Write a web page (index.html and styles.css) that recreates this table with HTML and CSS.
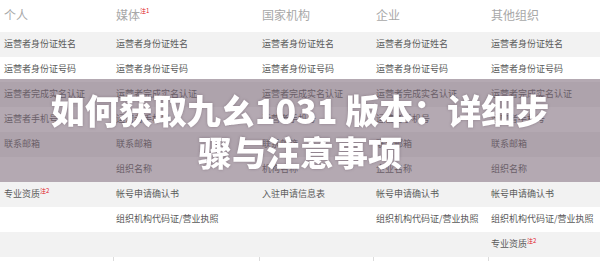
FILE: index.html
```html
<!DOCTYPE html>
<html lang="zh">
<head>
<meta charset="utf-8">
<link rel="stylesheet" href="styles.css">
</head>
<body>
<div class="page">
  <div class="table">
    <div class="row head">
      <div class="cell">个人</div>
      <div class="cell">媒体<sup class="note">注1</sup></div>
      <div class="cell">国家机构</div>
      <div class="cell">企业</div>
      <div class="cell">其他组织</div>
    </div>
    <div class="row alt">
      <div class="cell">运营者身份证姓名</div>
      <div class="cell">运营者身份证姓名</div>
      <div class="cell">运营者身份证姓名</div>
      <div class="cell">运营者身份证姓名</div>
      <div class="cell">运营者身份证姓名</div>
    </div>
    <div class="row">
      <div class="cell">运营者身份证号码</div>
      <div class="cell">运营者身份证号码</div>
      <div class="cell">运营者身份证号码</div>
      <div class="cell">运营者身份证号码</div>
      <div class="cell">运营者身份证号码</div>
    </div>
    <div class="row alt">
      <div class="cell">运营者完成实名认证</div>
      <div class="cell">运营者完成实名认证</div>
      <div class="cell">运营者完成实名认证</div>
      <div class="cell">运营者完成实名认证</div>
      <div class="cell">运营者完成实名认证</div>
    </div>
    <div class="row">
      <div class="cell">运营者手机号</div>
      <div class="cell">运营者手机号</div>
      <div class="cell">运营者手机号</div>
      <div class="cell">运营者手机号</div>
      <div class="cell">运营者手机号</div>
    </div>
    <div class="row alt">
      <div class="cell">联系邮箱</div>
      <div class="cell">联系邮箱</div>
      <div class="cell">联系邮箱</div>
      <div class="cell">联系邮箱</div>
      <div class="cell">联系邮箱</div>
    </div>
    <div class="row">
      <div class="cell"></div>
      <div class="cell">组织名称</div>
      <div class="cell">机构名称</div>
      <div class="cell">企业名称</div>
      <div class="cell">组织名称</div>
    </div>
    <div class="row alt">
      <div class="cell">专业资质<sup class="note">注2</sup></div>
      <div class="cell">帐号申请确认书</div>
      <div class="cell">入驻申请信息表</div>
      <div class="cell">帐号申请确认书</div>
      <div class="cell">帐号申请确认书</div>
    </div>
    <div class="row">
      <div class="cell"></div>
      <div class="cell">组织机构代码证/营业执照</div>
      <div class="cell"></div>
      <div class="cell">组织机构代码证/营业执照</div>
      <div class="cell">组织机构代码证/营业执照</div>
    </div>
    <div class="row alt">
      <div class="cell"></div>
      <div class="cell"></div>
      <div class="cell"></div>
      <div class="cell"></div>
      <div class="cell">专业资质<sup class="note">注2</sup></div>
    </div>
    <div class="row lined">
      <div class="cell"></div>
      <div class="cell"></div>
      <div class="cell"></div>
      <div class="cell"></div>
      <div class="cell"></div>
    </div>
  </div>
  <div class="banner">
    <h1 class="title">如何获取九幺1031 版本：详细步骤与注意事项</h1>
  </div>
</div>
</body>
</html>
```
FILE: styles.css
```css
html, body {
  margin: 0;
  padding: 0;
  background: #ffffff;
}
.page {
  position: relative;
  width: 600px;
  height: 261px;
  overflow: hidden;
  font-family: "Noto Sans CJK SC", "Noto Sans", sans-serif;
}
.table {
  display: flex;
  flex-direction: column;
}
.row {
  display: grid;
  grid-template-columns: 113px 146px 114px 115px 112px;
  height: 25px;
  align-items: center;
  font-size: 9px;
  color: #5a5a5a;
  background: #ffffff;
}
.row.alt {
  background: #f2f2f2;
}
.row.head {
  height: 32px;
  font-size: 12px;
  color: #a8a8a8;
  align-items: start;
}
.row.head .cell {
  padding-top: 8px;
}
.cell {
  padding-left: 3px;
  white-space: nowrap;
  line-height: 1.2;
}
.row .cell:first-child {
  padding-left: 4px;
}
.note {
  color: #e0202a;
  font-size: 6px;
  vertical-align: top;
  line-height: 1;
  position: relative;
  top: -1px;
}
.row.head .note {
  top: 0;
}
.row.lined {
  height: 20px;
  align-items: stretch;
}
.row.lined .cell + .cell {
  border-left: 1px solid #dcdcdc;
}
.banner {
  position: absolute;
  left: 0;
  top: 79px;
  width: 600px;
  height: 103px;
  background: rgba(118, 98, 114, 0.55);
  backdrop-filter: blur(0.7px);
  display: flex;
  align-items: center;
  justify-content: center;
}
.title {
  margin: 0;
  width: 520px;
  text-align: center;
  color: #ffffff;
  font-family: "Noto Sans CJK SC", sans-serif;
  font-weight: 900;
  font-size: 34px;
  line-height: 42px;
  text-shadow: 0 0 3px rgba(60, 40, 55, 0.35);
}
```
